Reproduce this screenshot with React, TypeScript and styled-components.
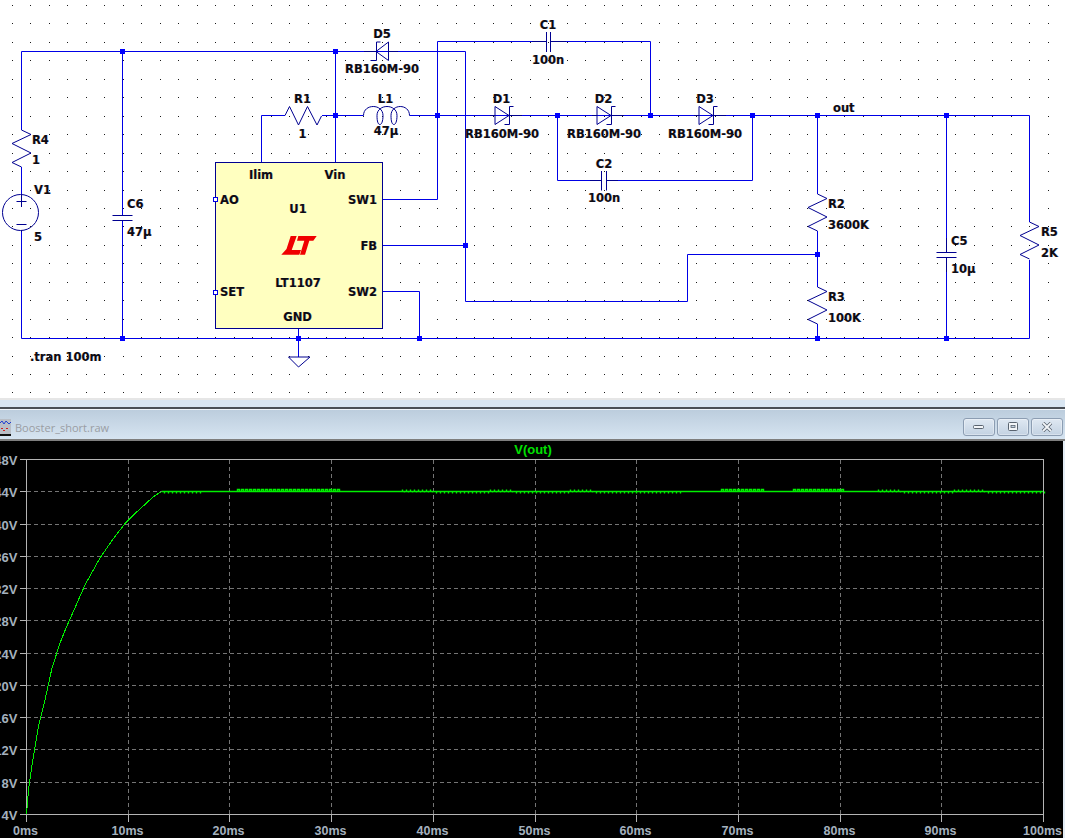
import type { ReactElement } from "react";
import styled, { createGlobalStyle } from "styled-components";

const GlobalStyle = createGlobalStyle`
  html, body {
    margin: 0;
    padding: 0;
    background: #fff;
    overflow: hidden;
  }
`;

const WIRE = "#0000e6";
const SYMBOL = "#000090";
const TRACE = "#00f000";

type Anchor = "start" | "middle" | "end";
type SchematicLabel = { text: string; x: number; y: number; anchor?: Anchor };

const LABELS: SchematicLabel[] = [
  { text: "D5", x: 382, y: 34, anchor: "middle" },
  { text: "RB160M-90", x: 382, y: 68.5, anchor: "middle" },
  { text: "C1", x: 548, y: 24.5, anchor: "middle" },
  { text: "100n", x: 548, y: 60, anchor: "middle" },
  { text: "R1", x: 302.5, y: 98.5, anchor: "middle" },
  { text: "1", x: 302.5, y: 133.5, anchor: "middle" },
  { text: "L1", x: 385.5, y: 98.5, anchor: "middle" },
  { text: "47µ", x: 386, y: 131, anchor: "middle" },
  { text: "D1", x: 501.5, y: 98.5, anchor: "middle" },
  { text: "RB160M-90", x: 502, y: 134, anchor: "middle" },
  { text: "D2", x: 603.5, y: 98.5, anchor: "middle" },
  { text: "RB160M-90", x: 604, y: 134, anchor: "middle" },
  { text: "D3", x: 705, y: 98.5, anchor: "middle" },
  { text: "RB160M-90", x: 705, y: 134, anchor: "middle" },
  { text: "C2", x: 604, y: 163.5, anchor: "middle" },
  { text: "100n", x: 604, y: 198, anchor: "middle" },
  { text: "out", x: 833, y: 108 },
  { text: "R4", x: 32, y: 139.5 },
  { text: "1", x: 32, y: 160 },
  { text: "V1", x: 34, y: 189.5 },
  { text: "5", x: 34, y: 237 },
  { text: "C6", x: 127, y: 204 },
  { text: "47µ", x: 127, y: 232 },
  { text: "Ilim", x: 261, y: 175, anchor: "middle" },
  { text: "Vin", x: 335, y: 175, anchor: "middle" },
  { text: "AO", x: 220, y: 200 },
  { text: "SW1", x: 377, y: 200, anchor: "end" },
  { text: "U1", x: 298, y: 209, anchor: "middle" },
  { text: "FB", x: 377, y: 246, anchor: "end" },
  { text: "LT1107", x: 298, y: 283, anchor: "middle" },
  { text: "SET", x: 220, y: 292 },
  { text: "SW2", x: 377, y: 292, anchor: "end" },
  { text: "GND", x: 297.5, y: 317, anchor: "middle" },
  { text: ".tran 100m", x: 30, y: 356.5 },
  { text: "R2", x: 828, y: 203.5 },
  { text: "3600K", x: 828, y: 225 },
  { text: "R3", x: 828, y: 296.5 },
  { text: "100K", x: 828, y: 318 },
  { text: "C5", x: 951, y: 241 },
  { text: "10µ", x: 951, y: 269 },
  { text: "R5", x: 1041, y: 232 },
  { text: "2K", x: 1041, y: 252.5 },
];

// wires, drawn in the wire colour
const WIRES = [
  "M21.5 130V51.5H465.5V301.5H687.5V254.5H817.5",
  "M122.5 51.5V215",
  "M122.5 220V338.5",
  "M335.5 51.5V162.5",
  "M261.5 162.5V115.5H285",
  "M322 115.5H363.5",
  "M409.5 115.5H1029.5V222",
  "M1029.5 260V338.5H21.5V231",
  "M21.5 167V194",
  "M382.5 199.5H437.5V41.5H532",
  "M566 41.5H650.5V115.5",
  "M557.5 115.5V180.5H590",
  "M618 180.5H752.5V115.5",
  "M382.5 245.5H465.5",
  "M382.5 291.5H419.5V338.5",
  "M298.5 328V357",
  "M817.5 115.5V194",
  "M817.5 231V287",
  "M817.5 324V338.5",
  "M946.5 115.5V238",
  "M946.5 272V338.5",
];

const JUNCTIONS: [number, number][] = [
  [122, 51], [335, 51], [335, 115], [437, 115], [557, 115], [650, 115], [752, 115],
  [817, 115], [946, 115], [465, 245], [817, 254], [122, 338], [298, 338], [419, 338],
  [817, 338], [946, 338],
];

const resistorV = (x: number, y: number) =>
  `M${x} ${y}l9.5 4.5l-19 9l19 9.5l-19 9.5l9.5 4.5`;

const diode = (x: number) =>
  `M${x} 115.5H${x + 5}M${x + 5} 106.5V124.5L${x + 19} 115.5L${x + 5} 106.5ZM${x + 19} 115.5H${x + 32}` +
  `M${x + 23.5} 106.5H${x + 19.5}V124.5H${x + 14.5}`;

const SYMBOLS = [
  resistorV(21.5, 130),
  resistorV(817.5, 194),
  resistorV(817.5, 287),
  resistorV(1029.5, 222),
  "M285 115.5l4.5 -9l9 18.5l9 -18.5l9.5 18.5l4.5 -9",
  // L1 coil
  "M363.5 115.5c0 -12 19.5 -12 19.5 0c0 6 -1.5 9 -3 9c-2 0 -3 -3 -3 -9c0 -12 20 -12 20 0c0 6 -1.5 9 -3 9c-2 0 -3 -3 -3 -9c0 -12 18.5 -12 18.5 0",
  diode(490),
  diode(592),
  diode(694),
  // D5, pointing left
  "M364 51.5H376M388.5 42V60.5L376 51.5L388.5 42ZM388.5 51.5H398M380.5 42H376.5V60.5H370.5",
  // capacitor leads and plates
  "M532 41.5H546M546.5 32V52M550.5 32V52M550.5 41.5H566",
  "M590 180.5H602M601.5 171V190.5M606.5 171V190.5M606.5 180.5H618",
  "M946.5 238V252.5M936.5 252.5H956.5M936.5 257.5H956.5M946.5 257.5V272",
  "M112.5 215.5H132.5M112.5 220.5H132.5",
  // V1 source
  "M21.5 194V197M21.5 197V207M16.5 201.5H26.5M16.5 224.5H26.5M21.5 230V232",
  // ground
  "M288.5 357H310L298.5 367Z",
];

const LOGO_L = "290.7,236 296.7,236 291.7,250 301,250 299.3,254.7 281.3,254.7 286.5,249";
const LOGO_T = "298.3,236 316.7,236 313.3,240.7 309.3,240.7 305,254.7 300,254.7 304.3,240.7 297,240.7";

const DOTS = Array.from({ length: 58 }, (_, i) =>
  Array.from(
    { length: 22 },
    (_, j) => `M${Math.round(11.7 + i * 18.5)} ${Math.round(5 + j * 18.45)}h1v1h-1z`
  ).join("")
).join("");

// plot geometry, in window pixels minus the plot's top edge
const PLOT_TOP = 441;
const AXIS_LEFT = 26.5;
const AXIS_RIGHT = 1043.5;
const AXIS_TOP = 459.5 - PLOT_TOP;
const AXIS_BOTTOM = 814.5 - PLOT_TOP;
const VOLTS = ["48V", "44V", "40V", "36V", "32V", "28V", "24V", "20V", "16V", "12V", "8V", "4V"];
const TIMES = ["0ms", "10ms", "20ms", "30ms", "40ms", "50ms", "60ms", "70ms", "80ms", "90ms", "100ms"];
const voltY = (i: number) => Math.floor(AXIS_TOP + (i * (AXIS_BOTTOM - AXIS_TOP)) / 11) + 0.5;
const timeX = (i: number) => Math.floor(AXIS_LEFT + (i * (AXIS_RIGHT - AXIS_LEFT)) / 10) + 0.5;

const RISE: [number, number][] = [
  [26.5, 814], [28.5, 790], [31.7, 767], [35, 747], [38.3, 727], [45, 700], [52, 668], [60, 643],
  [66, 628], [74, 610], [85, 585], [100, 558], [112.7, 539.5], [125, 523.5], [133.3, 515], [143.3, 506],
  [153.3, 496.7], [161.5, 491.5],
];

type Ripple = "comb" | "flat" | "square" | "bump";
const RIPPLE: [number, Ripple][] = [
  [198, "comb"], [235, "flat"], [340, "square"], [400, "flat"],
  [433, "bump"], [487, "comb"], [513, "bump"], [567, "comb"],
  [593, "bump"], [680, "comb"], [718, "flat"], [763, "square"],
  [790, "flat"], [843, "square"], [877, "flat"], [900, "bump"],
  [950, "comb"], [983, "bump"], [1043, "comb"],
];

const LEVEL = 491.5;
const TRACE_END = 1043;

// the settled part of the trace: one straight run plus the ripple on top of it
const buildRipple = (): string => {
  let x = 161.5;
  let d = `M${x} ${LEVEL}H${TRACE_END}`;
  for (const [to, kind] of RIPPLE) {
    for (; x < to; x += 4) {
      if (kind === "comb") d += `M${x + 3} ${LEVEL}v2`;
      else if (kind === "square") d += `M${x} ${LEVEL}v-2h2v2`;
      else if (kind === "bump") d += `M${x + 1} ${LEVEL}v-2M${x + 3} ${LEVEL}v1`;
    }
  }
  return d;
};

const risePath = RISE.map(([x, y], i) => `${i ? "L" : "M"}${x} ${y}`).join("");

const Label = styled.span<{ $x: number; $y: number; $anchor: Anchor }>`
  position: absolute;
  left: ${(p) => p.$x}px;
  top: ${(p) => p.$y}px;
  transform: translate(
    ${(p) => (p.$anchor === "middle" ? "-50%" : p.$anchor === "end" ? "-100%" : "0")},
    calc(-50% + 1px)
  );
  font-family: "DejaVu Sans", sans-serif;
  font-weight: 700;
  font-size: 11.5px;
  line-height: 1;
  white-space: nowrap;
  color: #0c0c14;
  text-shadow: -0.5px 0 rgba(225, 140, 40, 0.35), 0.5px 0 rgba(40, 90, 220, 0.35);
`;

const Page = styled.div`
  display: flex;
  flex-direction: column;
  width: 1065px;
  height: 838px;
  overflow: hidden;
`;

const SchematicPane = styled.section`
  position: relative;
  flex: none;
  height: 398px;
  background: #fff;
`;

const Drawing = styled.svg`
  display: block;
`;

const Splitter = styled.div`
  flex: none;
  height: 11px;
  box-sizing: border-box;
  background: #d9e6f2;
  border-top: 2px solid #e6e6e6;
  border-bottom: 2px solid #4a4f55;
`;

const WaveWindow = styled.section`
  flex: 1;
  display: flex;
  flex-direction: column;
  min-height: 0;
  background: #e4edf5;
  padding-right: 2px;
`;

const TitleBar = styled.header`
  flex: none;
  display: flex;
  align-items: flex-start;
  height: 32px;
  box-sizing: border-box;
  margin-right: -2px;
  padding: 8px 2px 0 0;
  background: linear-gradient(#bccddd, #d6e4f1);
  border-top: 1px solid #f0f5fa;
  border-bottom: 2px solid #7e7e7e;
`;

const AppIcon = styled.svg`
  display: block;
  flex: none;
  margin: 1px 4px 0 0;
`;

const Title = styled.span`
  font-family: "Open Sans", "Noto Sans", sans-serif;
  font-size: 11px;
  line-height: 20px;
  color: #9a9da3;
`;

const WindowButtons = styled.div`
  display: flex;
  gap: 2px;
  margin-left: auto;
`;

const WindowButton = styled.button`
  display: flex;
  align-items: center;
  justify-content: center;
  width: 32px;
  height: 18px;
  padding: 0;
  border: 1px solid #8c9db2;
  border-radius: 3px;
  background: linear-gradient(#dfe8f2, #c3d2e2);
  box-shadow: inset 0 0 0 1px rgba(255, 255, 255, 0.35);
`;

const PlotArea = styled.div`
  flex: 1;
  min-height: 0;
  background: #000;
`;

const AxisText = styled.text`
  font-family: "Liberation Sans", Arial, sans-serif;
  font-weight: 700;
  font-size: 13px;
  fill: #a4b1be;
`;

const TimeText = styled(AxisText)`
  font-size: 12.5px;
`;

const PlotTitle = styled.text`
  font-family: "Liberation Sans", Arial, sans-serif;
  font-weight: 700;
  font-size: 13px;
  fill: #00e000;
`;

function Schematic(): ReactElement {
  return (
    <SchematicPane>
      <Drawing width="1065" height="398" viewBox="0 0 1065 398">
        <path d={DOTS} fill="#1a1a1a" shapeRendering="crispEdges" />
        <g fill="none" stroke={WIRE} strokeWidth="1">
          {WIRES.map((d) => (
            <path key={d} d={d} />
          ))}
        </g>
        <rect x="215.5" y="162.5" width="167" height="166" fill="#ffffc0" stroke={SYMBOL} />
        <rect x="213.5" y="197.5" width="4" height="4" fill="#fff" stroke={WIRE} />
        <rect x="213.5" y="290.5" width="4" height="4" fill="#fff" stroke={WIRE} />
        <polygon points={LOGO_L} fill="#f00000" />
        <polygon points={LOGO_T} fill="#f00000" />
        <circle cx="20.5" cy="212.5" r="18" fill="none" stroke={SYMBOL} />
        <g fill="none" stroke={SYMBOL} strokeWidth="1">
          {SYMBOLS.map((d) => (
            <path key={d} d={d} />
          ))}
        </g>
        {JUNCTIONS.map(([x, y]) => (
          <rect key={`${x}-${y}`} x={x - 2} y={y - 2} width="5" height="5" fill="#0000ff" />
        ))}
      </Drawing>
      {LABELS.map((l) => (
        <Label key={`${l.text}-${l.x}-${l.y}`} $x={l.x} $y={l.y} $anchor={l.anchor ?? "start"}>
          {l.text}
        </Label>
      ))}
    </SchematicPane>
  );
}

function WaveformPlot(): ReactElement {
  return (
    <PlotArea>
      <Drawing width="1063" height="397" viewBox="0 0 1063 397">
        <PlotTitle x="533" y="13" textAnchor="middle">
          V(out)
        </PlotTitle>
        <g stroke="#747474" strokeDasharray="4 3" shapeRendering="crispEdges">
          {VOLTS.slice(1, -1).map((v, i) => (
            <line key={v} x1={AXIS_LEFT} x2={AXIS_RIGHT} y1={voltY(i + 1)} y2={voltY(i + 1)} />
          ))}
          {TIMES.slice(1, -1).map((t, i) => (
            <line key={t} x1={timeX(i + 1)} x2={timeX(i + 1)} y1={AXIS_TOP} y2={AXIS_BOTTOM} />
          ))}
        </g>
        <g stroke="#b4b4b4" fill="none" shapeRendering="crispEdges">
          <rect x={AXIS_LEFT} y={AXIS_TOP} width={AXIS_RIGHT - AXIS_LEFT} height={AXIS_BOTTOM - AXIS_TOP} />
          {VOLTS.map((v, i) => (
            <line key={v} x1={19.5} x2={AXIS_LEFT} y1={voltY(i)} y2={voltY(i)} />
          ))}
          {TIMES.map((t, i) => (
            <line key={t} x1={timeX(i)} x2={timeX(i)} y1={AXIS_BOTTOM} y2={AXIS_BOTTOM + 7} />
          ))}
        </g>
        <g transform={`translate(0 ${-PLOT_TOP})`} fill="none" stroke={TRACE}>
          <path d={risePath} shapeRendering="crispEdges" />
          <path d={buildRipple()} strokeWidth="1.4" />
        </g>
        {VOLTS.map((v, i) => (
          <AxisText key={v} x="17.5" y={voltY(i) + 5} textAnchor="end">
            {v}
          </AxisText>
        ))}
        {TIMES.map((t, i) => (
          <TimeText
            key={t}
            x={i === 10 ? 1062 : timeX(i) - 1}
            y="393.5"
            textAnchor={i === 10 ? "end" : "middle"}
          >
            {t}
          </TimeText>
        ))}
      </Drawing>
    </PlotArea>
  );
}

export default function App(): ReactElement {
  return (
    <Page>
      <GlobalStyle />
      <Schematic />
      <Splitter />
      <WaveWindow>
        <TitleBar>
          <AppIcon width="11" height="17" viewBox="0 0 11 17">
            <rect width="11" height="15" fill="#b9bec6" />
            <path d="M0 4l2 -2l2 3l2 -3l3 3l2 -2" fill="none" stroke="#2040d0" />
            <path d="M1 9h2v1H1zM6 9h2v1H6zM3 11h2v1H3z" fill="#d02020" />
            <rect y="15" width="11" height="2" fill="#111" />
          </AppIcon>
          <Title>Booster_short.raw</Title>
          <WindowButtons>
            <WindowButton aria-label="Minimize">
              <svg width="12" height="6" viewBox="0 0 12 6">
                <rect x="0.5" y="1.5" width="10" height="3" rx="1" fill="#f2f5f8" stroke="#59636f" />
              </svg>
            </WindowButton>
            <WindowButton aria-label="Restore">
              <svg width="12" height="10" viewBox="0 0 12 10">
                <rect x="1.5" y="0.5" width="9" height="8" rx="1" fill="#f2f5f8" stroke="#59636f" />
                <rect x="4" y="3.5" width="4" height="2" fill="#c3d2e2" stroke="#59636f" strokeWidth="0.8" />
              </svg>
            </WindowButton>
            <WindowButton aria-label="Close">
              <svg width="12" height="10" viewBox="0 0 12 10">
                <path d="M2 1l8 8M10 1l-8 8" stroke="#59636f" strokeWidth="3.4" />
                <path d="M2 1l8 8M10 1l-8 8" stroke="#f2f5f8" strokeWidth="1.8" />
              </svg>
            </WindowButton>
          </WindowButtons>
        </TitleBar>
        <WaveformPlot />
      </WaveWindow>
    </Page>
  );
}
